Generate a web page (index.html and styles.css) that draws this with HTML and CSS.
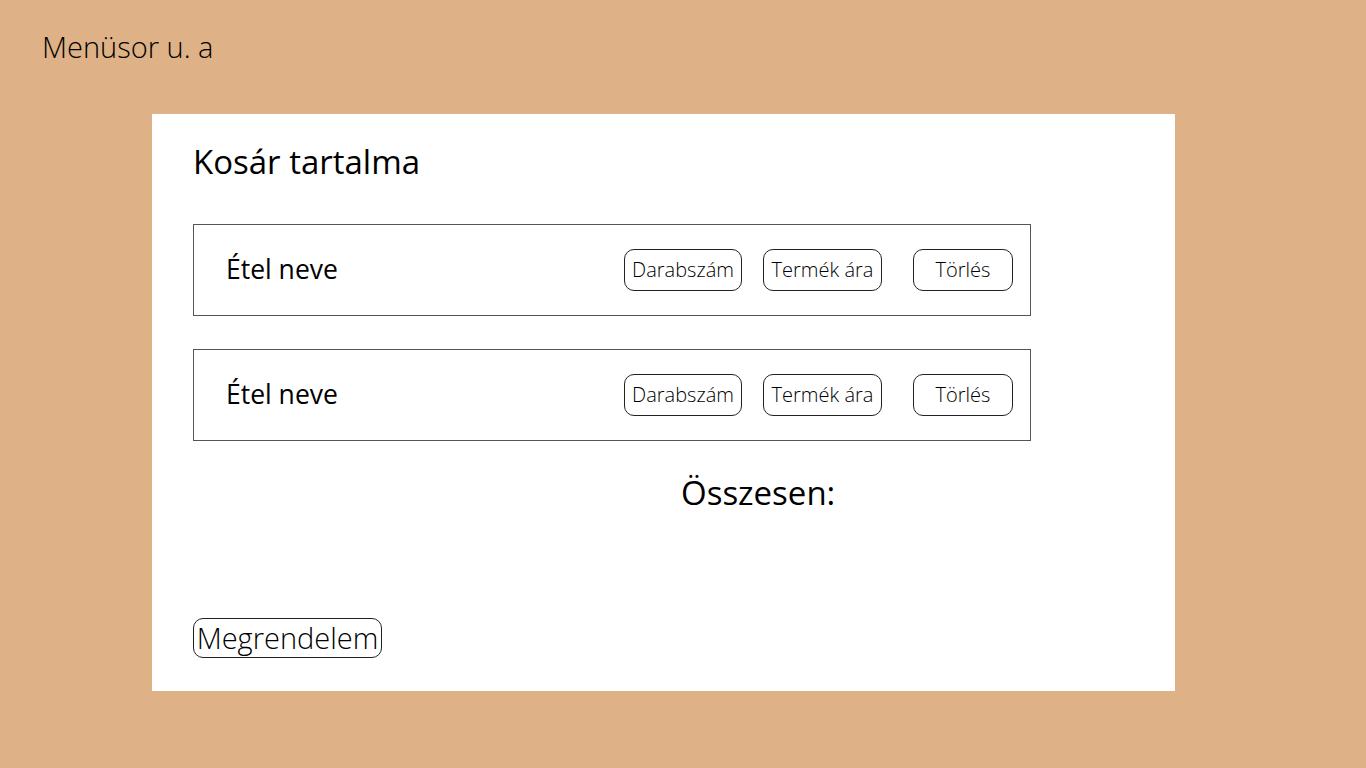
FILE: index.html
```html
<!DOCTYPE html>
<html lang="hu">
<head>
<meta charset="utf-8">
<title>Kosár</title>
<link rel="stylesheet" href="styles.css">
</head>
<body>
<header class="menubar">Menüsor u. a</header>
<main class="panel">
  <h1 class="title">Kosár tartalma</h1>
  <div class="item">
    <span class="item-name">Étel neve</span>
    <div class="item-actions">
      <button class="pill pill-qty">Darabszám</button>
      <button class="pill pill-price">Termék ára</button>
      <button class="pill pill-del">Törlés</button>
    </div>
  </div>
  <div class="item">
    <span class="item-name">Étel neve</span>
    <div class="item-actions">
      <button class="pill pill-qty">Darabszám</button>
      <button class="pill pill-price">Termék ára</button>
      <button class="pill pill-del">Törlés</button>
    </div>
  </div>
  <div class="total">Összesen:</div>
  <button class="order">Megrendelem</button>
</main>
</body>
</html>
```
FILE: styles.css
```css
* { box-sizing: border-box; }
html, body { margin: 0; padding: 0; }
body {
  background: #deb286;
  font-family: "Open Sans", "DejaVu Sans", sans-serif;
  color: #000;
  width: 1366px;
  height: 768px;
  overflow: hidden;
}
.menubar {
  font-weight: 300;
  font-size: 29px;
  line-height: 38px;
  padding: 28px 0 0 42px;
  height: 114px;
}
.panel {
  margin-left: 152px;
  width: 1023px;
  height: 577px;
  background: #fff;
  padding: 26px 0 0 41px;
  display: flex;
  flex-direction: column;
  align-items: flex-start;
}
.title {
  margin: 0;
  font-weight: 400;
  font-size: 33px;
  line-height: 44px;
  height: 84px;
}
.item {
  width: 838px;
  height: 92px;
  border: 1px solid #555;
  display: flex;
  align-items: center;
  padding: 0 17px 0 32px;
  margin-bottom: 33px;
}
.item-name {
  font-size: 26.5px;
  line-height: 34px;
  padding-bottom: 2px;
  flex: 1;
}
.item-actions {
  display: flex;
  align-items: center;
}
.pill {
  font-family: inherit;
  font-weight: 300;
  font-size: 20px;
  line-height: 26px;
  background: #fff;
  color: #000;
  border: 1px solid #222;
  border-radius: 10px;
  height: 42px;
  padding: 0 0 1px 0;
}
.pill-qty { width: 118px; margin-right: 21px; }
.pill-price { width: 119px; margin-right: 31px; }
.pill-del { width: 100px; }
.total {
  font-size: 33px;
  line-height: 44px;
  margin-left: 488px;
  margin-top: -3px;
}
.order {
  margin-top: 103px;
  font-family: inherit;
  font-weight: 300;
  font-size: 29px;
  background: #fff;
  color: #000;
  border: 1px solid #222;
  border-radius: 10px;
  height: 40px;
  width: 189px;
  padding: 0;
  line-height: 36px;
}
```
